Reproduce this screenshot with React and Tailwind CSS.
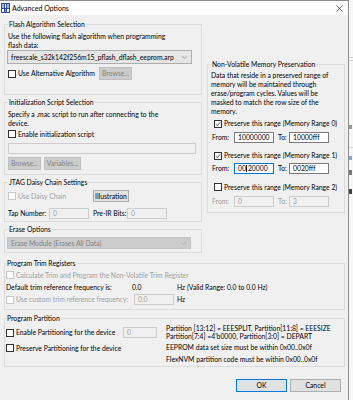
import React from 'react';

const Box = ({ checked, disabled }) => (
  <span
    className={`flex h-[8px] w-[8px] shrink-0 items-center justify-center border bg-white ${
      disabled ? 'border-[#c8c8c8]' : 'border-[#333333]'
    }`}
  >
    {checked && (
      <svg viewBox="0 0 8 8" className="h-[6px] w-[6px]">
        <path d="M1 4.2 L3.1 6.2 L7 1.6" fill="none" stroke="#222" strokeWidth="1" />
      </svg>
    )}
  </span>
);

const CheckRow = ({ label, checked, disabled, className = '' }) => (
  <div className={`flex h-[9px] items-center gap-[2px] ${className}`}>
    <Box checked={checked} disabled={disabled} />
    <span className={`whitespace-nowrap ${disabled ? 'text-[#a0a0a0]' : ''}`}>{label}</span>
  </div>
);

const Group = ({ title, className = '', children }) => (
  <fieldset className={`border border-[#dcdcdc] ${className}`}>
    <legend className="px-[1px] leading-[9px] whitespace-nowrap">{title}</legend>
    {children}
  </fieldset>
);

const Field = ({ value, disabled, focused, className = '' }) => (
  <div
    className={`flex h-[11px] items-center border pl-[3px] ${
      focused
        ? 'border-[#0078d7] bg-white'
        : disabled
        ? 'border-[#cccccc] bg-[#f0f0f0] text-[#a0a0a0]'
        : 'border-[#7a7a7a] bg-white'
    } ${className}`}
  >
    {value}
  </div>
);

const Btn = ({ label, disabled, primary, className = '' }) => (
  <div
    className={`flex items-center justify-center border ${
      disabled
        ? 'border-[#bfbfbf] bg-[#cccccc] text-[#838383]'
        : primary
        ? 'border-[#0078d7] bg-[#e1e1e1]'
        : 'border-[#adadad] bg-[#e1e1e1]'
    } ${className}`}
  >
    {label}
  </div>
);

const Chevron = ({ color }) => (
  <svg viewBox="0 0 8 5" className="h-[3px] w-[5px]">
    <path d="M0.5 0.5 L4 4 L7.5 0.5" fill="none" stroke={color} strokeWidth="1" />
  </svg>
);

export default function App() {
  return (
    <div className="flex h-[400px] w-[353px] overflow-hidden bg-[#f0f0f0] font-['Lato',sans-serif] text-[6.8px] leading-[9px] text-black">
      <div className="flex w-[349px] shrink-0 flex-col border-t border-r border-[#8c8c8c]">
        {/* title bar */}
        <div className="flex h-[14px] items-center bg-white pl-[1px] pr-[5px]">
          <div className="grid h-[10px] w-[9px] grid-cols-3 gap-[1px] bg-[#2b4f9e] p-[1px]">
            <span className="bg-[#9fb8e6]" />
            <span className="bg-white" />
            <span className="bg-[#9fb8e6]" />
            <span className="bg-white" />
            <span className="bg-[#6f8fd0]" />
            <span className="bg-white" />
          </div>
          <span className="ml-[2px] text-[7px]">Advanced Options</span>
          <svg viewBox="0 0 8 8" className="ml-auto h-[7px] w-[7px]">
            <path d="M0.5 0.5 L7.5 7.5 M7.5 0.5 L0.5 7.5" stroke="#222" strokeWidth="0.8" />
          </svg>
        </div>

        <div className="flex flex-col pl-[4px] pr-[3px] pt-[5px]">
          <div className="flex gap-[5px]">
            {/* left column */}
            <div className="flex w-[198px] flex-col gap-[3px]">
              <Group title="Flash Algorithm Selection" className="h-[75px] px-[3px]">
                <p className="mt-[2.5px]">
                  Use the following flash algorithm when programming
                  <br />
                  flash data:
                </p>
                <div className="mt-[0.5px] -ml-[1px] flex h-[14px] w-[185px] items-center justify-between border border-[#adadad] bg-[#e5e5e5] pl-[3px] pr-[4px]">
                  <span>freescale_s32k142f256m15_pflash_dflash_eeprom.arp</span>
                  <Chevron color="#606060" />
                </div>
                <div className="mt-[3px] flex h-[13px] items-center">
                  <CheckRow label="Use Alternative Algorithm" className="w-[91px]" />
                  <Btn label="Browse..." disabled className="h-[13px] w-[33px]" />
                </div>
              </Group>

              <Group title="Initialization Script Selection" className="h-[77px] px-[3px]">
                <p className="mt-[2.5px]">
                  Specify a .mac script to run after connecting to the
                  <br />
                  device.
                </p>
                <CheckRow label="Enable initialization script" className="mt-[2px]" />
                <Field disabled className="mt-[4.5px] w-[188px]" />
                <div className="mt-[3px] flex gap-[3px]">
                  <Btn label="Browse..." disabled className="h-[13px] w-[33px]" />
                  <Btn label="Variables..." disabled className="h-[13px] w-[37px]" />
                </div>
              </Group>

              <Group title="JTAG Daisy Chain Settings" className="h-[44px] px-[3px]">
                <div className="mt-[3px] flex h-[12px] items-center">
                  <CheckRow label="Use Daisy Chain" disabled className="w-[85px]" />
                  <Btn label="Illustration" className="h-[12px] w-[36px]" />
                </div>
                <div className="mt-[6px] flex h-[11px] items-center">
                  <span className="w-[41px]">Tap Number:</span>
                  <Field value="0" disabled className="w-[40px]" />
                  <span className="ml-[4px] w-[34px]">Pre-IR Bits:</span>
                  <Field value="0" disabled className="w-[40px]" />
                </div>
              </Group>

              <Group title="Erase Options" className="h-[28px] px-[3px]">
                <div className="mt-[3px] -ml-[1px] flex h-[12px] w-[184px] items-center justify-between border border-[#c4c4c4] bg-[#cccccc] pl-[3px] pr-[4px] text-[#838383]">
                  <span>Erase Module (Erases All Data)</span>
                  <Chevron color="#9a9a9a" />
                </div>
              </Group>
            </div>

            {/* right column */}
            <div className="mt-[40px] w-[138px]">
              <Group title="Non-Volatile Memory Preservation" className="h-[153px] px-[3px]">
                <p className="mt-[1.5px]">
                  Data that reside in a preserved range of
                  <br />
                  memory will be maintained through
                  <br />
                  erase/program cycles. Values will be
                  <br />
                  masked to match the row size of the
                  <br />
                  memory.
                </p>
                <CheckRow label="Preserve this range (Memory Range 0)" checked className="ml-[3px] mt-[3.5px]" />
                <div className="mt-[4px] flex h-[11px] items-center">
                  <span className="ml-[1px] w-[22px]">From:</span>
                  <Field value="10000000" className="w-[40px]" />
                  <span className="ml-[4px] w-[11px]">To:</span>
                  <Field value="10000fff" className="w-[40px]" />
                </div>
                <CheckRow label="Preserve this range (Memory Range 1)" checked className="ml-[3px] mt-[8px]" />
                <div className="mt-[3px] flex h-[11px] items-center">
                  <span className="ml-[1px] w-[22px]">From:</span>
                  <Field
                    value={
                      <span className="flex items-center">
                        00
                        <span className="mx-[0.5px] h-[7px] w-[1px] bg-black" />
                        20000
                      </span>
                    }
                    focused
                    className="w-[40px]"
                  />
                  <span className="ml-[4px] w-[11px]">To:</span>
                  <Field value="0020fff" className="w-[40px]" />
                </div>
                <CheckRow label="Preserve this range (Memory Range 2)" className="ml-[3px] mt-[8.5px]" />
                <div className="mt-[4.5px] flex h-[11px] items-center">
                  <span className="ml-[1px] w-[22px] text-[#a0a0a0]">From:</span>
                  <Field value="0" disabled className="w-[40px]" />
                  <span className="ml-[4px] w-[11px] text-[#a0a0a0]">To:</span>
                  <Field value="3" disabled className="w-[40px]" />
                </div>
              </Group>
            </div>
          </div>

          <Group title="Program Trim Registers" className="mt-[6px] h-[51px] px-[1px]">
            <CheckRow
              label="Calculate Trim and Program the Non-Volatile Trim Register"
              disabled
              className="mt-[2.5px] gap-[1px]"
            />
            <div className="mt-[3px] flex h-[9px] items-center">
              <span className="w-[126px]">Default trim reference frequency is:</span>
              <span className="w-[45px]">0.0</span>
              <span>Hz (Valid Range: 0.0 to 0.0 Hz)</span>
            </div>
            <div className="mt-[2.5px] flex h-[11px] items-center">
              <CheckRow label="Use custom trim reference frequency:" disabled className="w-[128px]" />
              <Field value="0.0" disabled className="w-[40px]" />
              <span className="ml-[3px]">Hz</span>
            </div>
          </Group>

          <Group title="Program Partition" className="mt-[4px] h-[53px] px-[1px]">
            <div className="flex">
              <div className="w-[160px]">
                <div className="mt-[4px] flex h-[11px] items-center">
                  <CheckRow label="Enable Partitioning for the device" className="w-[117px] gap-[1px]" />
                  <Field value="0" disabled className="w-[34px]" />
                </div>
                <CheckRow label="Preserve Partitioning for the device" className="mt-[5.5px] gap-[1px]" />
              </div>
              <div className="mt-[0.5px] whitespace-nowrap">
                <p className="leading-[8px]">
                  Partition [13:12] = EEESPLIT, Partition[11:8] = EEESIZE
                  <br />
                  Partition[7:4] =4'b0000, Partition[3:0] = DEPART
                </p>
                <p className="mt-[3.5px]">EEPROM data set size must be within 0x00..0x0f</p>
                <p className="mt-[3px]">FlexNVM partition code must be within 0x00..0x0f</p>
              </div>
            </div>
          </Group>

          <div className="mt-[12px] flex justify-end gap-[3px] pr-[4px]">
            <Btn label="OK" primary className="h-[13px] w-[51px]" />
            <Btn label="Cancel" className="h-[13px] w-[51px]" />
          </div>
        </div>
      </div>

      {/* sliver of the window behind */}
      <div className="flex w-[4px] flex-col bg-[#f7f7f7]">
        <div className="h-[57px]" />
        <div className="h-[1px] bg-[#d0d0d0]" />
        <div className="mt-[2px] h-[1px] bg-[#d0d0d0]" />
        <div className="mt-[64px] h-[4px] w-[3px] bg-[#9a9a9a]" />
        <div className="mt-[18px] h-[1px] bg-[#d8d8d8]" />
        <div className="mt-[8px] h-[4px] w-[3px] bg-[#8aa6cc]" />
        <div className="mt-[10px] h-[5px] w-[3px] bg-[#7a7a7a]" />
        <div className="mt-[14px] h-[5px] w-[3px] bg-[#444444]" />
      </div>
    </div>
  );
}
